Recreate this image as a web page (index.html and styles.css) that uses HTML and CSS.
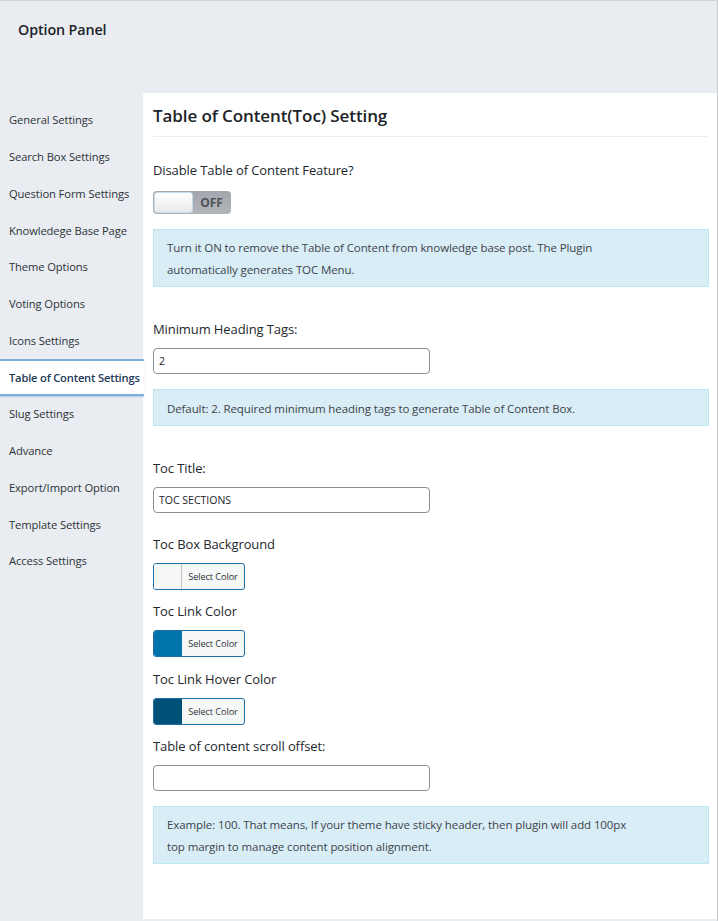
FILE: index.html
```html
<!DOCTYPE html>
<html lang="en">
<head>
<meta charset="utf-8">
<title>Option Panel</title>
<link rel="stylesheet" href="styles.css">
</head>
<body>
<div class="page">
  <header class="page-head">
    <h1 class="page-title">Option Panel</h1>
  </header>
  <div class="layout">
    <nav class="sidebar">
      <a class="nav-item">General Settings</a>
      <a class="nav-item">Search Box Settings</a>
      <a class="nav-item">Question Form Settings</a>
      <a class="nav-item">Knowledege Base Page</a>
      <a class="nav-item">Theme Options</a>
      <a class="nav-item">Voting Options</a>
      <a class="nav-item">Icons Settings</a>
      <a class="nav-item active">Table of Content Settings</a>
      <a class="nav-item">Slug Settings</a>
      <a class="nav-item">Advance</a>
      <a class="nav-item">Export/Import Option</a>
      <a class="nav-item">Template Settings</a>
      <a class="nav-item">Access Settings</a>
    </nav>
    <main class="panel">
      <h2 class="panel-title">Table of Content(Toc) Setting</h2>

      <div class="field f-first">
        <div class="label label-toggle">Disable Table of Content Feature?</div>
        <div class="toggle">
          <span class="toggle-knob"></span>
          <span class="toggle-text">OFF</span>
        </div>
        <div class="info">Turn it ON to remove the Table of Content from knowledge base post. The Plugin automatically generates TOC Menu.</div>
      </div>

      <div class="field f-gap-lg">
        <div class="label">Minimum Heading Tags:</div>
        <input class="text-input" type="text" value="2">
        <div class="info info-single">Default: 2. Required minimum heading tags to generate Table of Content Box.</div>
      </div>

      <div class="field f-gap-lg">
        <div class="label">Toc Title:</div>
        <input class="text-input" type="text" value="TOC SECTIONS">
      </div>

      <div class="field f-gap-md">
        <div class="label">Toc Box Background</div>
        <button class="color-btn" type="button"><span class="swatch swatch-light"></span><span class="color-text">Select Color</span></button>
      </div>

      <div class="field f-gap-sm">
        <div class="label">Toc Link Color</div>
        <button class="color-btn" type="button"><span class="swatch swatch-blue"></span><span class="color-text">Select Color</span></button>
      </div>

      <div class="field f-gap-sm">
        <div class="label">Toc Link Hover Color</div>
        <button class="color-btn" type="button"><span class="swatch swatch-dark"></span><span class="color-text">Select Color</span></button>
      </div>

      <div class="field f-gap-sm">
        <div class="label">Table of content scroll offset:</div>
        <input class="text-input" type="text" value="">
        <div class="info">Example: 100. That means, If your theme have sticky header, then plugin will add 100px top margin to manage content position alignment.</div>
      </div>
    </main>
  </div>
</div>
</body>
</html>
```

FILE: styles.css
```css
* { box-sizing: border-box; }

html, body {
  margin: 0;
  padding: 0;
  background: #e9ecf1;
}

body {
  font-family: "Open Sans", "Noto Sans", "Liberation Sans", sans-serif;
  color: #2c3338;
}

.page {
  width: 718px;
  height: 921px;
  border-top: 1px solid #cfd1d4;
  border-right: 1px solid #c9cbce;
  display: flex;
  flex-direction: column;
}

.page-head {
  height: 92px;
  padding: 17px 0 0 18px;
}

.page-title {
  margin: 0;
  font-size: 14.3px;
  font-weight: 600;
  line-height: 24px;
  color: #1d2327;
  letter-spacing: -0.1px;
}

.layout {
  display: flex;
  align-items: flex-start;
}

.sidebar {
  width: 143px;
  flex: none;
  padding-top: 8.6px;
  display: flex;
  flex-direction: column;
}

.nav-item {
  display: flex;
  align-items: center;
  height: 36.75px;
  padding-left: 9px;
  font-size: 11.2px;
  color: #2c3338;
  white-space: nowrap;
  letter-spacing: -0.1px;
}

.nav-item.active {
  background: #fff;
  font-weight: 600;
  font-size: 11.2px;
  letter-spacing: -0.2px;
  color: #1d3a57;
  border-top: 2px solid #7bb0dc;
  border-bottom: 2px solid #7bb0dc;
  box-shadow: 0 1px 1px rgba(60, 120, 180, 0.25);
  margin-right: -1px;
  position: relative;
  z-index: 1;
}

.panel {
  flex: 1;
  background: #fff;
  height: 826px;
  padding: 0 10px 0 10px;
}

.panel-title {
  margin: 0;
  padding: 11px 0 8px;
  font-size: 17px;
  line-height: 24px;
  font-weight: 600;
  color: #1d2327;
  border-bottom: 1px solid #ececec;
  letter-spacing: -0.1px;
}

.field { display: flex; flex-direction: column; align-items: flex-start; }
.f-first { margin-top: 23px; }
.f-gap-lg { margin-top: 32px; }
.f-gap-md { margin-top: 21px; }
.f-gap-sm { margin-top: 11.5px; }

.label {
  font-size: 13px;
  line-height: 20px;
  font-weight: 500;
  color: #23282d;
  margin-bottom: 9px;
  letter-spacing: -0.1px;
}

.label-toggle { margin-bottom: 11px; }

.toggle {
  width: 78px;
  height: 23px;
  border-radius: 4px;
  background: linear-gradient(#a3a7ad, #b1b5ba);
  display: flex;
  align-items: center;
  padding: 1px;
}

.toggle-knob {
  width: 39px;
  height: 21px;
  border-radius: 3px;
  background: linear-gradient(#ffffff, #e9eaeb);
  border: 1px solid #c6dced;
}

.toggle-text {
  flex: 1;
  text-align: center;
  font-size: 12px;
  font-weight: 700;
  color: #50555a;
}

.info {
  align-self: stretch;
  margin-top: 15px;
  margin-right: -2px;
  background: #d9edf7;
  border: 1px solid #bce8f1;
  padding: 7px 80px 6px 13px;
  font-size: 11.5px;
  line-height: 21.5px;
  color: #3c434a;
  letter-spacing: -0.1px;
}

.info-single { padding: 8px 13px 5px; }

.text-input {
  width: 277px;
  height: 26px;
  margin: 0;
  border: 1px solid #8c8f94;
  border-radius: 4px;
  padding: 0 5px;
  font-family: "Open Sans", "Noto Sans", sans-serif;
  font-size: 10.5px;
  color: #1d2327;
  background: #fff;
}

.color-btn {
  display: flex;
  align-items: stretch;
  width: 92px;
  height: 27px;
  margin: 0;
  padding: 0;
  border: 1px solid #1f70a8;
  border-radius: 3px;
  background: #f6f7f7;
  overflow: hidden;
  font-family: "Open Sans", "Noto Sans", sans-serif;
}

.swatch {
  width: 28px;
  flex: none;
  border-right: 1px solid #c3c4c7;
}
.swatch-light { background: #f6f7f7; }
.swatch-blue { background: #0073aa; border-right-color: #0073aa; }
.swatch-dark { background: #005177; border-right-color: #005177; }

.color-text {
  flex: 1;
  display: flex;
  align-items: center;
  justify-content: center;
  font-size: 9.2px;
  color: #2c3338;
  letter-spacing: -0.1px;
}
```
